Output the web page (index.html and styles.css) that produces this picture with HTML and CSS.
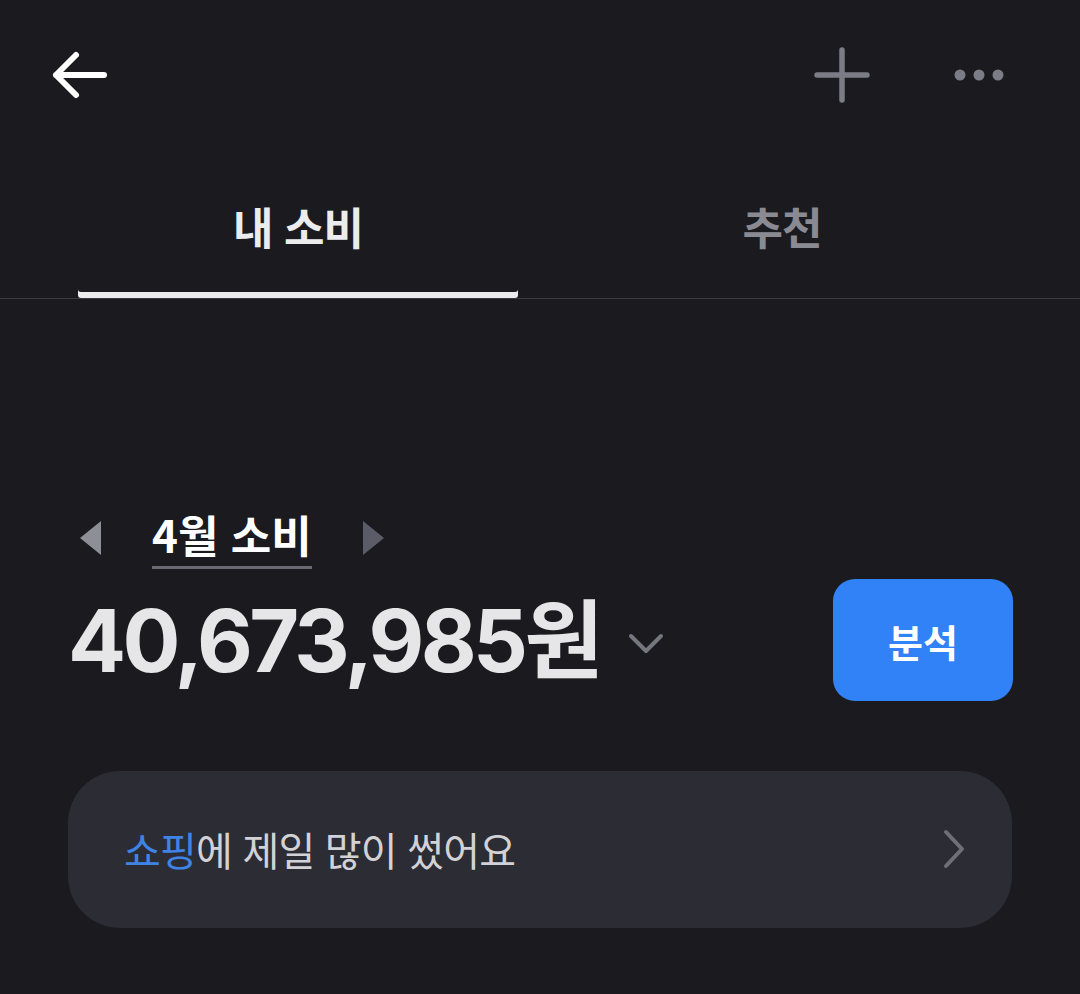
FILE: index.html
```html
<!DOCTYPE html>
<html lang="ko">
<head>
    <meta charset="UTF-8">
    <meta name="viewport" content="width=device-width, initial-scale=1.0">
    <title>내 소비</title>
    <link rel="stylesheet" href="styles.css">
</head>
<body>
    <div class="topbar">
        <button class="icon-btn back" aria-label="뒤로">
            <svg width="58" height="52" viewBox="0 0 58 52"><path d="M54 26H6M26 6L6 26l20 20" fill="none" stroke="#fff" stroke-width="6" stroke-linecap="round" stroke-linejoin="round"/></svg>
        </button>
        <div class="top-actions">
            <button class="icon-btn" aria-label="추가">
                <svg width="56" height="56" viewBox="0 0 56 56"><path d="M28 3v50M3 28h50" fill="none" stroke="#7c7c86" stroke-width="5.5" stroke-linecap="round"/></svg>
            </button>
            <button class="icon-btn" aria-label="더보기">
                <svg width="52" height="14" viewBox="0 0 52 14"><circle cx="7" cy="7" r="5.5" fill="#7c7c86"/><circle cx="26" cy="7" r="5.5" fill="#7c7c86"/><circle cx="45" cy="7" r="5.5" fill="#7c7c86"/></svg>
            </button>
        </div>
    </div>

    <div class="tabs">
        <div class="tab active">내 소비</div>
        <div class="tab">추천</div>
    </div>

    <div class="summary">
        <div class="month-row">
            <span class="tri tri-left"></span>
            <span class="month">4월 소비</span>
            <span class="tri tri-right"></span>
        </div>
        <div class="amount-row">
            <div class="amount">
                40,673,985원
                <svg class="caret" width="36" height="22" viewBox="0 0 36 22"><path d="M3 3l15 15L33 3" fill="none" stroke="#76767e" stroke-width="4" stroke-linecap="round" stroke-linejoin="round"/></svg>
            </div>
            <button class="analyze">분석</button>
        </div>
    </div>

    <div class="card">
        <div class="card-text"><span class="hl">쇼핑</span>에 제일 많이 썼어요</div>
        <svg width="24" height="40" viewBox="0 0 24 40"><path d="M4 3l16 17L4 37" fill="none" stroke="#6f6f78" stroke-width="4" stroke-linecap="round" stroke-linejoin="round"/></svg>
    </div>
</body>
</html>
```

FILE: styles.css
```css
body {
    margin: 0;
    background-color: #1a1a1f;
    font-family: "Noto Sans CJK KR", "Noto Sans", sans-serif;
    color: #ececee;
    width: 1080px;
    height: 994px;
    overflow: hidden;
}
button {
    font-family: inherit;
    border: none;
    background: none;
    padding: 0;
    cursor: pointer;
}
.topbar {
    display: flex;
    align-items: center;
    justify-content: space-between;
    height: 150px;
    padding: 0 75px 0 50px;
}
.icon-btn {
    display: flex;
    align-items: center;
    justify-content: center;
}
.top-actions {
    display: flex;
    align-items: center;
    gap: 83px;
}
.tabs {
    display: grid;
    grid-template-columns: 1fr 1fr;
    gap: 44px;
    padding: 0 78px;
    border-bottom: 1px solid #3a3a41;
}
.tab {
    text-align: center;
    font-size: 44px;
    font-weight: 700;
    color: #8a8a92;
    padding: 48px 0 43px;
    line-height: 1.3;
    letter-spacing: -1px;
}
.tab.active {
    color: #ececee;
    box-shadow: inset 0 -6px 0 #ececee;
    border-radius: 0 0 3px 3px;
}
.summary {
    padding: 207px 67px 0 68px;
}
.month-row {
    display: flex;
    align-items: center;
    padding-left: 12px;
}
.tri {
    width: 0;
    height: 0;
    border-top: 17px solid transparent;
    border-bottom: 17px solid transparent;
}
.tri-left {
    border-right: 21px solid #8e8e96;
}
.tri-right {
    border-left: 21px solid #5c5c69;
}
.month {
    font-size: 44px;
    font-weight: 700;
    color: #fff;
    line-height: 1.3;
    margin: 0 51px;
    padding-bottom: 3px;
    border-bottom: 3px solid #6a6a74;
}
.amount-row {
    display: flex;
    align-items: center;
    justify-content: space-between;
    margin-top: 4px;
}
.amount {
    display: flex;
    align-items: center;
    font-family: Inter, "Noto Sans CJK KR", sans-serif;
    font-size: 86px;
    font-weight: 700;
    letter-spacing: -3.6px;
    color: #e6e6e8;
    line-height: 1.4;
    margin-top: 8px;
}
.caret {
    margin-left: 28px;
    margin-top: 4px;
}
.analyze {
    width: 180px;
    height: 122px;
    border-radius: 22px;
    background-color: #3182f6;
    color: #fff;
    font-size: 38px;
    font-weight: 700;
    margin-top: 5px;
}
.card {
    margin: 69px 68px 0;
    height: 157px;
    border-radius: 52px;
    background-color: #2c2c35;
    display: flex;
    align-items: center;
    justify-content: space-between;
    padding: 0 46px 0 56px;
}
.card-text {
    font-size: 40px;
    color: #d2d2d6;
    letter-spacing: -0.8px;
}
.hl {
    color: #3f84e5;
}
```
